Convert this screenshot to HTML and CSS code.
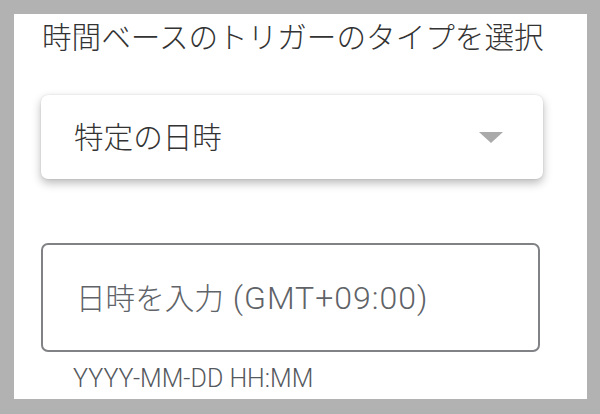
FILE: index.html
```html
<!DOCTYPE html>
<html lang="ja">
<head>
<meta charset="utf-8">
<link rel="stylesheet" href="styles.css">
</head>
<body>
<div class="panel">
  <div class="title">時間ベースのトリガーのタイプを選択</div>
  <div class="select">
    <span class="select-text">特定の日時</span>
    <span class="arrow"></span>
  </div>
  <div class="input">
    <span class="placeholder">日時を入力<span class="latin"> (GMT+09:00)</span></span>
  </div>
  <div class="helper">YYYY-MM-DD HH:MM</div>
</div>
</body>
</html>
```

FILE: styles.css
```css
html, body {
  margin: 0;
  padding: 0;
}
body {
  background: #b2b2b2;
  width: 600px;
  height: 414px;
  overflow: hidden;
  font-family: Roboto, "Noto Sans CJK JP", sans-serif;
}
.panel {
  margin: 14px 0 0 14px;
  width: 573px;
  height: 385px;
  background: #fff;
  box-sizing: border-box;
  padding: 0 0 0 27px;
  display: flex;
  flex-direction: column;
}
.title {
  font-size: 29.6px;
  font-weight: 300;
  line-height: 36px;
  color: #333;
  padding-left: 1px;
  margin-top: 6px;
}
.select {
  margin-top: 39px;
  width: 502px;
  height: 84px;
  box-sizing: border-box;
  background: #fff;
  border-radius: 7px;
  box-shadow: 0 4px 10px rgba(0, 0, 0, 0.28), 0 0 2px rgba(0, 0, 0, 0.12);
  display: flex;
  align-items: center;
  padding: 0 40px 0 33px;
  justify-content: space-between;
}
.select-text {
  font-size: 29.6px;
  font-weight: 300;
  color: #333;
  margin-top: -4px;
}
.arrow {
  width: 0;
  height: 0;
  border-left: 12px solid transparent;
  border-right: 12px solid transparent;
  border-top: 11px solid #aaa;
}
.input {
  margin-top: 64px;
  width: 499px;
  height: 109px;
  box-sizing: border-box;
  border: 2px solid #808285;
  border-radius: 7px;
  display: flex;
  align-items: center;
  padding-left: 33px;
}
.placeholder {
  font-size: 29.6px;
  font-weight: 300;
  color: #606368;
  margin-top: -2px;
}
.latin {
  font-size: 32px;
  font-weight: 300;
  letter-spacing: 1px;
  color: #5f6368;
}
.helper {
  margin-top: 14px;
  padding-left: 32px;
  font-size: 25px;
  font-weight: 300;
  color: #55595e;
  line-height: 26px;
}
```
